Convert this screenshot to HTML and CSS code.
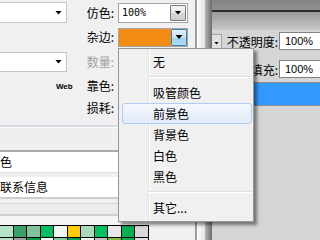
FILE: index.html
```html
<!DOCTYPE html>
<html lang="zh-CN">
    <head>
        <meta charset="UTF-8" />
        <meta name="viewport" content="width=device-width, initial-scale=1.0" />
        <title>存储为 Web 所用格式</title>
        <link rel="stylesheet" href="styles.css">
    </head>
    <body>
        <div class="app">
            <div class="left">
                <div class="settings">
                    <div class="select"><i class="arrow"></i></div>
                    <label class="lbl">仿色:</label>
                    <div class="combo">
                        <span class="combo-val">100%</span>
                        <span class="combo-btn"><i class="arrow"></i></span>
                    </div>

                    <div></div>
                    <label class="lbl">杂边:</label>
                    <div class="combo combo-matte">
                        <span class="combo-val swatch"></span>
                        <span class="combo-btn hot"><i class="arrow"></i></span>
                    </div>

                    <div class="select select-sm"><i class="arrow"></i></div>
                    <label class="lbl disabled">数量:</label>
                    <div></div>

                    <label class="lbl wide"><span class="web">Web</span>靠色:</label>
                    <div></div>

                    <div></div>
                    <label class="lbl">损耗:</label>
                    <div></div>
                </div>

                <div class="meta-head"></div>
                <div class="meta-field">色</div>
                <div class="meta-field second">联系信息</div>
                <div class="bands"></div>

                <div class="swatches">
                    <span style="background:#b6e3c6"></span>
                    <span style="background:#37a169"></span>
                    <span style="background:#80c29b"></span>
                    <span style="background:#00bf60"></span>
                    <span style="background:#eef8f0"></span>
                    <span style="background:#ffcc00"></span>
                    <span style="background:#a9d9b9"></span>
                    <span style="background:#00c060"></span>
                    <span style="background:#e8e8e8"></span>
                    <span style="background:#00b050"></span>
                    <span style="background:#d8d8d8"></span>
                    <span style="background:#b6e3c6"></span>
                    <span style="background:#a0a0a0"></span>
                    <span style="background:#00a040"></span>
                    <span style="background:#ffffff"></span>
                    <span style="background:#80d0a0"></span>
                    <span style="background:#00a050"></span>
                    <span style="background:#eef8ee"></span>
                    <span style="background:#c0c0c0"></span>
                    <span style="background:#80c040"></span>
                    <span style="background:#00b050"></span>
                    <span style="background:#e0e0e0"></span>
                </div>
            </div>

            <div class="divider">
                <div class="edge"></div>
                <div class="rail"></div>
                <div class="shade"></div>
            </div>

            <div class="right">
                <div class="panel-head"></div>
                <div class="opt-row first">
                    <div class="blend"><i class="arrow small"></i></div>
                    <span class="opt-lbl">不透明度:</span>
                    <div class="num">100%</div>
                </div>
                <div class="opt-row">
                    <span class="opt-lbl">填充:</span>
                    <div class="num">100%</div>
                </div>
                <div class="layer-sel"></div>
            </div>
        </div>

        <!-- matte colour menu, opened from the 杂边 combo -->
        <ul class="menu">
            <li>无</li>
            <li class="sep"></li>
            <li>吸管颜色</li>
            <li class="hot">前景色</li>
            <li>背景色</li>
            <li>白色</li>
            <li>黑色</li>
            <li class="sep"></li>
            <li>其它...</li>
        </ul>
    </body>
</html>
```

FILE: styles.css
```css
* {
    box-sizing: border-box;
}
html,
body {
    margin: 0;
    padding: 0;
}
body {
    position: relative;
    width: 320px;
    height: 240px;
    overflow: hidden;
    background: #f0f0f0;
    color: #000;
    font: 12px "Noto Sans CJK SC", sans-serif;
}
.app {
    display: flex;
    height: 240px;
}

/* left: optimize settings */
.left {
    width: 195px;
    background: #f0f0f0;
    overflow: hidden;
}
.settings {
    display: grid;
    grid-template-columns: 67px 51px 70px;
    grid-template-rows: 25px 24px 25px 23px 21px;
    align-items: center;
}
.select {
    height: 21px;
    margin-left: -3px;
    padding-right: 4px;
    border: 1px solid #c6c6c6;
    background: #fff;
    display: flex;
    align-items: center;
    justify-content: flex-end;
}
.select-sm {
    height: 20px;
}
.arrow {
    display: block;
    width: 7px;
    height: 4px;
    background: #000;
    clip-path: polygon(0 0, 100% 0, 50% 100%);
}
.arrow.small {
    width: 5px;
    height: 3px;
}
.lbl {
    text-align: right;
    padding-right: 4px;
    white-space: nowrap;
    line-height: 14px;
}
.lbl.wide {
    grid-column: 1 / 3;
}
.lbl.disabled {
    color: #a3a3a3;
}
.web {
    font: bold 8px "Liberation Sans", sans-serif;
    margin-right: 14px;
    vertical-align: 2px;
}
.combo {
    height: 20px;
    border: 1px solid #a5a5a5;
    background: #fff;
    display: flex;
}
.combo-val {
    flex: 1;
    padding-left: 3px;
    font: 10px/18px "DejaVu Sans Mono", monospace;
}
.combo-btn {
    width: 16px;
    margin: 1px 1px 1px 0;
    border: 1px solid #7a7a7a;
    border-radius: 1px;
    background: linear-gradient(#f6f6f6, #e6e6e6 50%, #d8d8d8 51%, #cdcdcd);
    display: flex;
    align-items: center;
    justify-content: center;
}
.combo-matte {
    height: 19px;
}
.combo-matte .swatch {
    background: #f28c12;
}
.combo-btn.hot {
    margin: 0;
    border-color: #3c7fb1;
    background: linear-gradient(#e3f2fc, #c2e3f8 50%, #9dd0f0 51%, #b0dbf4);
}

.meta-head {
    margin-top: 7px;
    height: 27px;
    border-top: 2px solid #d5dce4;
    border-bottom: 2px solid #a9a9a9;
    background: #efefef;
    box-shadow: inset 0 1px #fff;
}
.meta-field {
    height: 21px;
    background: #fff;
    border-bottom: 1px solid #dedede;
    line-height: 20px;
    white-space: nowrap;
}
.meta-field.second {
    margin-top: 4px;
    height: 22px;
    border-bottom: 2px solid #cfcfcf;
}
.bands {
    height: 26px;
    background: linear-gradient(#f0f0f0 4px, #d6d6d6 4px, #d6d6d6 5px, #ececec 5px, #ececec 15px, #d0d0d0 15px, #d0d0d0 17px, #f4f4f4 17px);
}
.swatches {
    display: grid;
    grid-template-columns: repeat(11, 12.5px);
    grid-auto-rows: 11px;
    gap: 1px;
    width: max-content;
    margin-left: -1px;
    border: 1px solid #000;
    background: #000;
}
.swatches span {
    display: block;
}

/* splitter between the panels */
.divider {
    width: 17px;
    display: flex;
}
.divider .edge {
    width: 2px;
    background: #9c9c9c;
}
.divider .rail {
    width: 8px;
    background: linear-gradient(to right, #fbfbfb, #e2e5e8);
}
.divider .shade {
    width: 7px;
    background: linear-gradient(to right, #b4b4b4, #6c6c6c);
}

/* right: layers panel */
.right {
    flex: 1;
    background: #d5d5d5;
    overflow: hidden;
}
.panel-head {
    height: 30px;
    background: linear-gradient(#858585, #909090 10px, #2c2c2c 10px, #2c2c2c 12px, #9a9a9a 12px, #c8c8c8);
}
.opt-row {
    display: flex;
    align-items: center;
    height: 18px;
    margin-top: 10px;
}
.opt-row.first {
    margin-top: 2px;
}
.blend {
    width: 10px;
    height: 15px;
    padding: 0 0 3px 2px;
    border: 1px solid #a3a3a3;
    border-left: 0;
    background: #e2e2e2;
    display: flex;
    align-items: flex-end;
}
.opt-lbl {
    margin-left: auto;
    margin-right: 1px;
    white-space: nowrap;
}
.num {
    width: 45px;
    height: 18px;
    margin-right: -4px;
    padding-left: 5px;
    border: 1px solid #828282;
    background: #fff;
    font: 11px/16px "Liberation Sans", sans-serif;
}
.layer-sel {
    margin-top: 4px;
    height: 24px;
    border-top: 1px solid #8e8e8e;
    border-bottom: 1px solid #8e8e8e;
    background: #3399ff;
}

/* popup menu */
.menu {
    position: absolute;
    left: 118px;
    top: 48px;
    width: 136px;
    margin: 0;
    padding: 2px 0 3px;
    list-style: none;
    border: 1px solid #979797;
    background: linear-gradient(to right, transparent 29px, #e2e3e3 29px, #e2e3e3 30px, #fff 30px, #fff 31px, transparent 31px), #f0f0f0;
    box-shadow: 3px 3px 3px rgba(0, 0, 0, 0.45);
}
.menu li {
    height: 21px;
    line-height: 21px;
    padding-left: 34px;
    white-space: nowrap;
}
.menu .hot {
    margin: 0 1px 0 3px;
    padding-left: 30px;
    border: 1px solid #aecdf2;
    border-radius: 3px;
    background: linear-gradient(#f4f7fc, #e1ebf8);
    line-height: 19px;
}
.menu .sep {
    height: 10px;
    padding: 0;
    margin: 0 1px 0 29px;
    background: linear-gradient(transparent 4px, #e0e0e0 4px, #e0e0e0 5px, #fff 5px, #fff 6px, transparent 6px);
}
```
